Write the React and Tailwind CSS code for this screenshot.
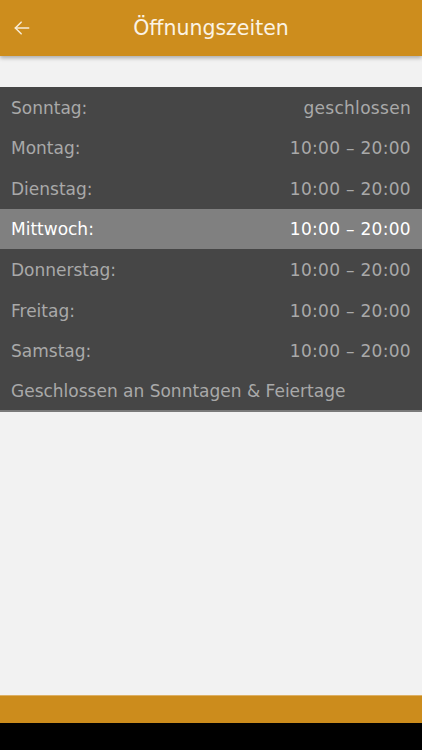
import React from 'react';

const hours = [
  { day: 'Sonntag:', time: 'geschlossen' },
  { day: 'Montag:', time: '10:00 – 20:00' },
  { day: 'Dienstag:', time: '10:00 – 20:00' },
  { day: 'Mittwoch:', time: '10:00 – 20:00', today: true },
  { day: 'Donnerstag:', time: '10:00 – 20:00' },
  { day: 'Freitag:', time: '10:00 – 20:00' },
  { day: 'Samstag:', time: '10:00 – 20:00' },
];

const App = () => {
  return (
    <div
      className="flex flex-col h-[750px] w-[422px] bg-[#f2f2f2] overflow-hidden"
      style={{ fontFamily: '"DejaVu Sans", Verdana, sans-serif' }}
    >
      {/* top bar */}
      <div className="relative z-10 flex items-center h-14 bg-[#cd8d1d] shadow-[0_2px_4px_rgba(0,0,0,0.3)]">
        <button className="flex items-center justify-center w-10 h-14 pl-1 text-[#f7ecd8]">
          <svg width="20" height="20" viewBox="0 0 24 24" fill="none" stroke="currentColor" strokeWidth="1.8" strokeLinecap="round" strokeLinejoin="round">
            <path d="M20 12H4" />
            <path d="M11 5l-7 7 7 7" />
          </svg>
        </button>
        <h1 className="flex-1 text-center text-[20.5px] text-[#fbf3e4] pr-10">Öffnungszeiten</h1>
      </div>

      <div className="h-[31px] shrink-0" />

      {/* opening hours */}
      <div className="bg-[#464646] border-b-2 border-[#7a7a7a] text-[17px]">
        {hours.map((h) => (
          <div
            key={h.day}
            className={
              h.today
                ? 'flex items-center justify-between h-[40.6px] px-[11px] pt-[2px] bg-[#808080] text-white'
                : 'flex items-center justify-between h-[40.6px] px-[11px] pt-[2px] text-[#a9a9a9]'
            }
          >
            <span>{h.day}</span>
            <span className="tracking-[0.3px]">{h.time}</span>
          </div>
        ))}
        <div className="flex items-center h-[39px] px-[11px] pt-[2px] text-[#a9a9a9]">
          Geschlossen an Sonntagen &amp; Feiertage
        </div>
      </div>

      <div className="flex-1" />

      {/* bottom bar */}
      <div className="h-[28px] shrink-0 bg-[#cc8c1c] border-t border-[#ddb064]" />
      <div className="h-[27px] shrink-0 bg-black" />
    </div>
  );
};

export default App;
